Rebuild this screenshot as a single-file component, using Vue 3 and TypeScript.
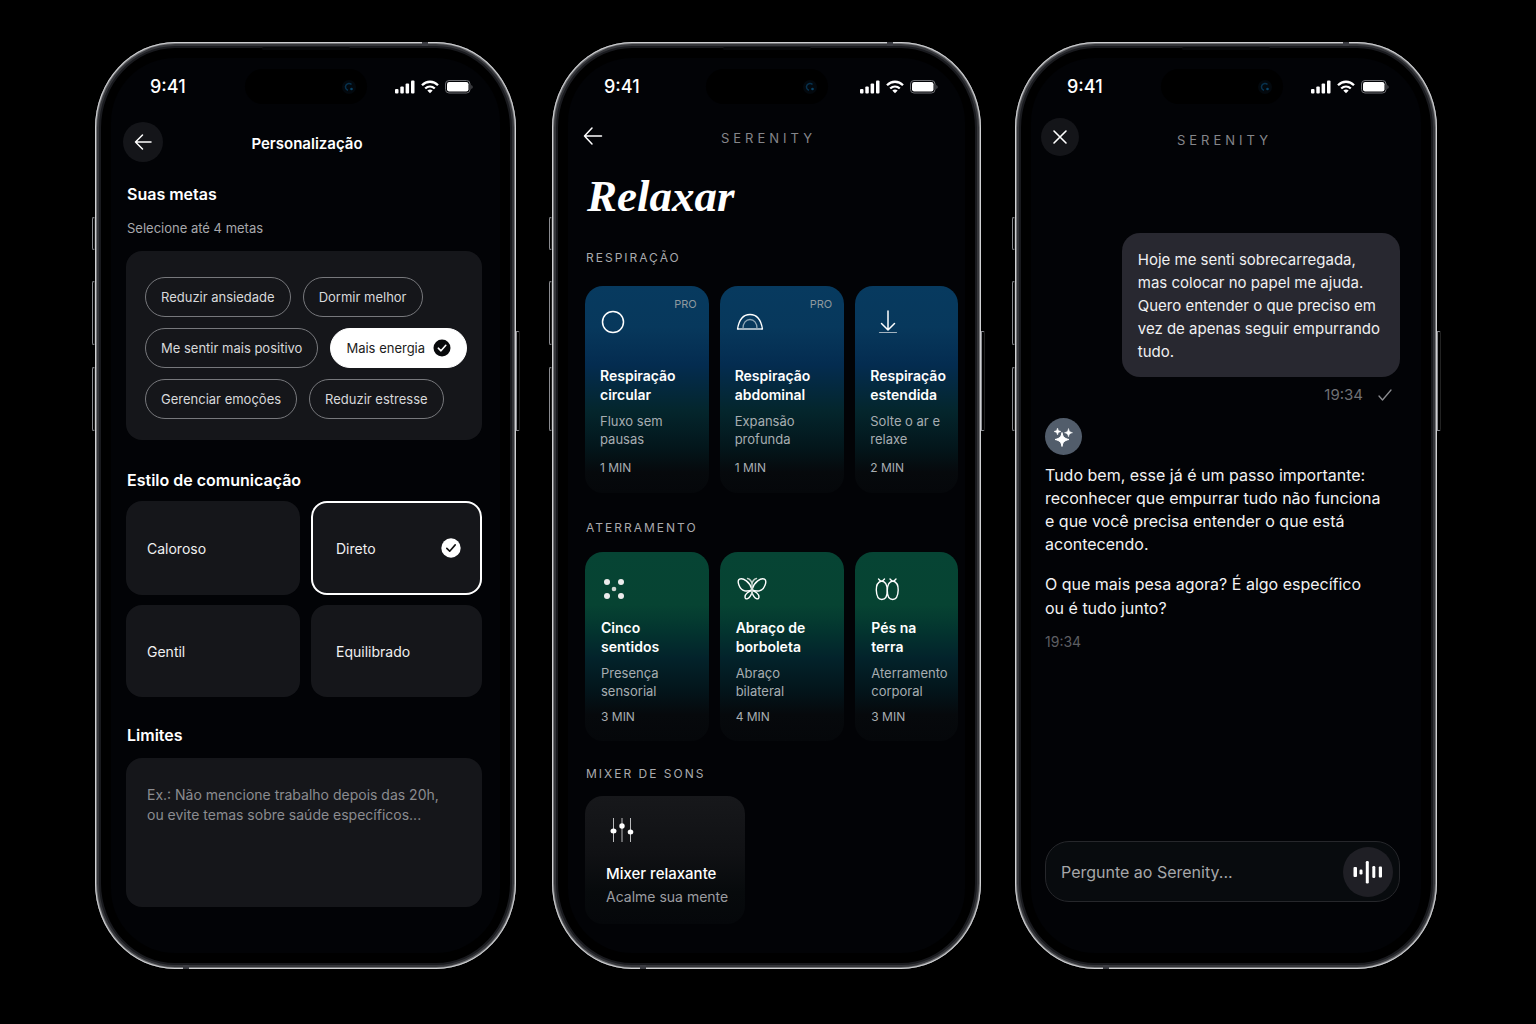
<script setup lang="ts">
import { ref } from 'vue'

interface Exercise {
  icon: string
  title: [string, string]
  text: [string, string]
  minutes: string
  pro?: boolean
}

interface Goal {
  label: string
  checked: boolean
}

const goalRows = ref<Goal[][]>([
  [
    { label: 'Reduzir ansiedade', checked: false },
    { label: 'Dormir melhor', checked: false },
  ],
  [
    { label: 'Me sentir mais positivo', checked: false },
    { label: 'Mais energia', checked: true },
  ],
  [
    { label: 'Gerenciar emoções', checked: false },
    { label: 'Reduzir estresse', checked: false },
  ],
])

const styles = ['Caloroso', 'Direto', 'Gentil', 'Equilibrado']
const chosenStyle = ref('Direto')
const limits = ref('')
const question = ref('')

const breathing: Exercise[] = [
  { icon: 'circle', title: ['Respiração', 'circular'], text: ['Fluxo sem', 'pausas'], minutes: '1 MIN', pro: true },
  { icon: 'dome', title: ['Respiração', 'abdominal'], text: ['Expansão', 'profunda'], minutes: '1 MIN', pro: true },
  { icon: 'down', title: ['Respiração', 'estendida'], text: ['Solte o ar e', 'relaxe'], minutes: '2 MIN' },
]

const grounding: Exercise[] = [
  { icon: 'dots', title: ['Cinco', 'sentidos'], text: ['Presença', 'sensorial'], minutes: '3 MIN' },
  { icon: 'butterfly', title: ['Abraço de', 'borboleta'], text: ['Abraço', 'bilateral'], minutes: '4 MIN' },
  { icon: 'feet', title: ['Pés na', 'terra'], text: ['Aterramento', 'corporal'], minutes: '3 MIN' },
]

const groups = [
  { name: 'Respiração', tone: 'blue', items: breathing },
  { name: 'Aterramento', tone: 'green', items: grounding },
]

const phones = ['goals', 'relax', 'chat']
</script>

<template>
  <main class="stage">
    <section v-for="phone in phones" :key="phone" class="phone" :class="phone">
      <i class="key key-action"></i>
      <i class="key key-up"></i>
      <i class="key key-down"></i>
      <i class="key key-power"></i>
      <i class="band band-top"></i>
      <i class="band band-bottom"></i>
      <i class="speaker"></i>

      <div class="status">
        <span class="clock">9:41</span>
        <span class="island">
          <svg width="16" height="16" viewBox="0 0 16 16" fill="none">
            <circle cx="8" cy="8" r="7" fill="#03080d" />
            <path d="M10.5 5.5A3.5 3.5 0 1 0 7 11.300" stroke="#07314d" stroke-width="1.500" />
            <circle cx="10.500" cy="10" r="1.300" fill="#084468" />
          </svg>
        </span>
        <span class="indicators">
          <svg width="20" height="14" viewBox="0 0 20 14" fill="#fff">
            <rect x="0" y="9" width="3.500" height="4.500" rx="1" />
            <rect x="5.300" y="6.500" width="3.500" height="7" rx="1" />
            <rect x="10.600" y="3.500" width="3.500" height="10" rx="1" />
            <rect x="16" y="0.500" width="3.500" height="13" rx="1" />
          </svg>
          <svg width="18" height="14" viewBox="0 0 18 14" fill="none" stroke="#fff" stroke-width="2.300">
            <path d="M1 5.200C5.500 0.600 12.500 0.600 17 5.200" />
            <path d="M4.200 8.500C7 5.900 11 5.900 13.800 8.500" />
            <path d="M9 13.300L6.300 10.500C8 9.200 10 9.200 11.700 10.500Z" fill="#fff" stroke="none" />
          </svg>
          <svg width="28" height="14" viewBox="0 0 28 14" fill="none">
            <rect x="0.500" y="0.500" width="24.500" height="12.500" rx="3.500" stroke="#6d6e72" />
            <rect x="2" y="2" width="21.500" height="9.500" rx="2.200" fill="#fff" />
            <path d="M26.500 5V9C27.800 8.300 27.800 5.700 26.500 5Z" fill="#6d6e72" />
          </svg>
        </span>
      </div>

      <template v-if="phone === 'goals'">
        <header class="bar">
          <button type="button" class="round" aria-label="Voltar">
            <svg width="18" height="18" viewBox="0 0 18 18" fill="none" stroke="#fff" stroke-width="1.500" stroke-linecap="round" stroke-linejoin="round">
              <path d="M17 9H1.500M8.500 2L1.500 9L8.500 16" />
            </svg>
          </button>
          <h1>Personalização</h1>
        </header>

        <h2 class="first">Suas metas</h2>
        <p class="hint">Selecione até 4 metas</p>
        <div class="panel">
          <div v-for="(row, i) in goalRows" :key="i" class="row">
            <label v-for="goal in row" :key="goal.label" class="chip" :class="{ on: goal.checked }">
              <input v-model="goal.checked" type="checkbox" class="ghost" />
              {{ goal.label }}
              <svg v-if="goal.checked" width="18" height="18" viewBox="0 0 18 18" fill="none">
                <circle cx="9" cy="9" r="8.500" fill="#08090b" />
                <path d="M5.300 9.200L8 11.800L12.800 6.300" stroke="#fff" stroke-width="1.600" stroke-linecap="round" stroke-linejoin="round" />
              </svg>
            </label>
          </div>
        </div>

        <h2 class="second">Estilo de comunicação</h2>
        <div class="tiles">
          <label v-for="name in styles" :key="name" class="tile" :class="{ on: chosenStyle === name }">
            <input v-model="chosenStyle" type="radio" name="style" class="ghost" :value="name" />
            {{ name }}
            <svg v-if="chosenStyle === name" width="20" height="20" viewBox="0 0 20 20" fill="none">
              <circle cx="10" cy="10" r="9.700" fill="#fff" />
              <path d="M5.800 10.400L8.700 13.200L14.200 6.900" stroke="#111" stroke-width="1.600" stroke-linecap="round" stroke-linejoin="round" />
            </svg>
          </label>
        </div>

        <h2 class="third"><label for="limits">Limites</label></h2>
        <textarea
          id="limits"
          v-model="limits"
          placeholder="Ex.: Não mencione trabalho depois das 20h,&#10;ou evite temas sobre saúde específicos..."
        ></textarea>
      </template>

      <template v-else-if="phone === 'relax'">
        <header class="bar">
          <button type="button" class="plain" aria-label="Voltar">
            <svg width="20" height="20" viewBox="0 0 20 20" fill="none" stroke="#fff" stroke-width="1.500" stroke-linecap="round" stroke-linejoin="round">
              <path d="M18.500 10H1.500M9 2L1.500 10L9 18" />
            </svg>
          </button>
          <span class="brand">SERENITY</span>
        </header>
        <h1 class="display">Relaxar</h1>

        <template v-for="group in groups" :key="group.name">
          <h2 class="label" :class="group.tone">{{ group.name }}</h2>
          <div class="deck" :class="group.tone">
            <button v-for="item in group.items" :key="item.icon" type="button" class="card">
              <span v-if="item.pro" class="pro">PRO</span>
              <svg v-if="item.icon === 'circle'" width="26" height="26" viewBox="0 0 26 26" fill="none" stroke="#fff" stroke-width="1.500">
                <circle cx="13" cy="13" r="10.500" />
              </svg>
              <svg v-else-if="item.icon === 'dome'" width="30" height="26" viewBox="0 0 30 26" fill="none" stroke="#fff" stroke-width="1.300" stroke-linejoin="round">
                <path d="M2.500 20H27.500C26 11 21.500 5.500 15 5.500S4 11 2.500 20Z" />
                <path d="M8 19.500C8 14 11 10.500 15 10.500S22 14 22 19.500" stroke="#8fa6b6" />
                <path d="M4 20H26" stroke="#8fa6b6" />
              </svg>
              <svg v-else-if="item.icon === 'down'" width="36" height="26" viewBox="0 0 36 26" fill="none" stroke="#fff" stroke-width="1.500" stroke-linecap="round" stroke-linejoin="round">
                <path d="M18 2V20.500M11.500 14.500L18 21L24.500 14.500" />
                <path d="M9.500 23.500H26.500" stroke="#a3b3bf" stroke-width="1.200" />
              </svg>
              <svg v-else-if="item.icon === 'dots'" width="26" height="26" viewBox="0 0 26 26" fill="#ececec">
                <circle cx="6" cy="6" r="3" />
                <circle cx="20" cy="6" r="3" />
                <circle cx="6" cy="20" r="3" />
                <circle cx="20" cy="20" r="3" />
                <circle cx="13" cy="13" r="2.300" fill="#cfd6d2" />
              </svg>
              <svg v-else-if="item.icon === 'butterfly'" width="32" height="26" viewBox="-2 0 32 26" fill="none" stroke="#fff" stroke-width="1.400" stroke-linecap="round" stroke-linejoin="round">
                <path d="M14 13.500C12 6 5 1.500 1.500 3.200C-1.500 4.800 1.500 13.800 6.500 14.800C9.500 15.300 12 15 14 13.500Z" />
                <path d="M14 13.500C16 6 23 1.500 26.500 3.200C29.500 4.800 26.500 13.800 21.500 14.800C18.500 15.300 16 15 14 13.500Z" />
                <path d="M14 14.500C11 15 7 18 7 21C7 24 11.500 24 14 16.500" />
                <path d="M14 14.500C17 15 21 18 21 21C21 24 16.500 24 14 16.500" />
                <path d="M14 18V8M14 8C13.500 5 11.500 3 9.500 2.500M14 8C14.500 5 16.500 3 18.500 2.500" stroke="#c6d2cc" />
              </svg>
              <svg v-else width="34" height="26" viewBox="0 0 34 26" fill="none" stroke="#fff" stroke-width="1.400" stroke-linecap="round">
                <path d="M10.500 5C7 6 5.200 10 5.300 14C5.500 20 7.500 23.500 10.800 23.500C14.500 23.500 16.300 20 16.300 14.500C16.300 9.500 14.500 5.500 10.500 5Z" />
                <path d="M22 5C25.500 6 27.300 10 27.200 14C27 20 25 23.500 21.700 23.500C18 23.500 16.300 20 16.300 14.500C16.300 9.500 18 5.500 22 5Z" />
                <path d="M7.500 3L9.500 5M13.500 3L11.500 5M19 3L21 5M25 3L23 5" />
              </svg>
              <strong>{{ item.title[0] }}<br />{{ item.title[1] }}</strong>
              <span class="text">{{ item.text[0] }}<br />{{ item.text[1] }}</span>
              <span class="minutes">{{ item.minutes }}</span>
            </button>
          </div>
        </template>

        <h2 class="label mix">Mixer de sons</h2>
        <button type="button" class="mixer">
          <svg width="32" height="26" viewBox="0 0 32 26" fill="#fff">
            <path d="M7 1H8V25H7ZM15.500 1H16.500V25H15.500ZM24 1H25V25H24Z" fill="#b9babc" />
            <ellipse cx="7.500" cy="14" rx="3" ry="2.500" />
            <ellipse cx="16" cy="9" rx="2.700" ry="2.700" />
            <ellipse cx="24.500" cy="15" rx="2.800" ry="2.500" />
          </svg>
          <strong>Mixer relaxante</strong>
          <span>Acalme sua mente</span>
        </button>
      </template>

      <template v-else>
        <header class="bar">
          <button type="button" class="round" aria-label="Fechar">
            <svg width="16" height="16" viewBox="0 0 16 16" fill="none" stroke="#fff" stroke-width="1.600" stroke-linecap="round">
              <path d="M2 2L14 14M14 2L2 14" />
            </svg>
          </button>
          <span class="brand">SERENITY</span>
        </header>

        <p class="bubble">
          Hoje me senti sobrecarregada,<br />mas colocar no papel me ajuda.<br />Quero entender o que preciso em<br />vez
          de apenas seguir empurrando<br />tudo.
        </p>
        <div class="sent">
          <time>19:34</time>
          <svg width="16" height="14" viewBox="0 0 16 14" fill="none" stroke="#8b8c90" stroke-width="1.300" stroke-linecap="round" stroke-linejoin="round">
            <path d="M2 8L5.500 12L14 2" />
          </svg>
        </div>

        <div class="avatar">
          <svg width="20" height="20" viewBox="1 0 20 20" fill="#fff">
            <path d="M9 5.500C9.800 10 11.500 11.500 16 12.500C11.500 13.500 9.800 15 9 19.500C8.200 15 6.500 13.500 2 12.500C6.500 11.500 8.200 10 9 5.500Z" stroke="#fff" stroke-linejoin="round" />
            <path d="M4.500 1C5 3.200 5.800 4 8 4.500C5.800 5 5 5.800 4.500 8C4 5.800 3.200 5 1 4.500C3.200 4 4 3.200 4.500 1Z" stroke="#fff" stroke-width="0.500" />
            <path d="M15.500 1.500C16 4.300 17 5.200 19.500 5.700C17 6.200 16 7 15.500 9.800C15 7 14 6.200 11.500 5.700C14 5.200 15 4.300 15.500 1.500Z" stroke="#fff" stroke-width="0.500" />
          </svg>
        </div>
        <p class="reply">
          Tudo bem, esse já é um passo importante:<br />reconhecer que empurrar tudo não funciona<br />e que você precisa
          entender o que está<br />acontecendo.
        </p>
        <p class="reply more">O que mais pesa agora? É algo específico<br />ou é tudo junto?</p>
        <time class="received">19:34</time>

        <form class="composer" @submit.prevent>
          <input v-model="question" type="text" aria-label="Pergunte ao Serenity" placeholder="Pergunte ao Serenity..." />
          <button type="button" aria-label="Falar">
            <svg width="30" height="24" viewBox="0 0 30 24" fill="#fff">
              <rect x="0.500" y="7" width="3.500" height="10" rx="1" />
              <rect x="6.500" y="9.500" width="3" height="5" rx="1.200" />
              <rect x="12.800" y="1" width="3" height="22.500" rx="1.300" />
              <rect x="19.300" y="6" width="3" height="12" rx="1.300" />
              <rect x="25.800" y="6.500" width="3.200" height="11" rx="1" />
            </svg>
          </button>
        </form>
      </template>
    </section>
  </main>
</template>

<style>
html,
body {
  background: #000;
}
</style>

<style scoped>
.stage {
  box-sizing: border-box;
  min-height: 100vh;
  display: grid;
  grid-template-columns: minmax(0, 423fr) minmax(0, 429fr) minmax(0, 422fr);
  align-items: stretch;
  align-content: start;
  gap: 34px;
  padding: 42px 99px 55px 95px;
  background: #000;
  color: #fff;
  font-family: Inter, 'Liberation Sans', sans-serif;
}

.stage *,
.stage *::before {
  box-sizing: border-box;
}

h1,
h2,
p {
  margin: 0;
  font-weight: 500;
}

button,
input,
textarea {
  font-family: inherit;
  color: inherit;
  border: 0;
  margin: 0;
  padding: 0;
}

svg {
  display: block;
  flex: none;
}

.phone {
  position: relative;
  display: flex;
  flex-direction: column;
  border-radius: 80px / 86px;
  background: #000;
  box-shadow:
    inset 0 0 0 1px #cfd0d2,
    inset 0 0 0 2px #77787b,
    inset 0 0 0 4px #343539,
    inset 0 0 0 6px #191a1e;
}

.phone::before {
  content: '';
  position: absolute;
  inset: 16px;
  border-radius: 64px;
  background: #020306;
}

.phone > * {
  position: relative;
}

.phone > .key,
.phone > .band,
.phone > .speaker {
  position: absolute;
}

.key {
  left: -3px;
  width: 3px;
  border: 1px solid #8a8b90;
  border-right-color: #222;
  border-radius: 2px 0 0 2px;
}

.key-action {
  top: 175px;
  height: 33px;
}

.key-up {
  top: 239px;
  height: 64px;
}

.key-down {
  top: 325px;
  height: 64px;
}

.key-power {
  left: auto;
  right: -4px;
  width: 4px;
  top: 289px;
  height: 100px;
  border-radius: 0 2px 2px 0;
}

.band {
  width: 6px;
  height: 4px;
  background: #3a3b41;
}

.band-top {
  top: 0;
  right: 88px;
}

.band-bottom {
  bottom: 0;
  left: 88px;
}

.speaker {
  top: 5px;
  left: 50%;
  width: 88px;
  height: 3px;
  margin-left: -44px;
  border-radius: 2px;
  background: #08090b;
}

.status {
  display: grid;
  grid-template-columns: 1fr 122px 1fr;
  align-items: center;
  height: 35px;
  margin-top: 27px;
}

.clock {
  padding-left: 55px;
  font-size: 18px;
  line-height: 20px;
  font-weight: 500;
}

.island {
  display: flex;
  align-items: center;
  justify-content: flex-end;
  height: 35px;
  padding-right: 10px;
  border-radius: 18px;
  background: #000;
}

.indicators {
  display: flex;
  justify-content: flex-end;
  gap: 6px;
  padding-right: 43px;
}

.relax .clock,
.chat .clock {
  padding-left: 52px;
}

.chat .status {
  padding-right: 8px;
}

.chat .indicators {
  padding-right: 40px;
}

.bar {
  display: grid;
  grid-template-columns: 1fr auto 1fr;
  align-items: center;
}

.round {
  display: grid;
  place-items: center;
  width: 40px;
  height: 40px;
  border-radius: 50%;
  background: #141519;
}

.brand {
  padding-top: 4px;
  padding-left: 4px;
  color: #85868a;
  font-size: 13px;
  line-height: 20px;
  letter-spacing: 4px;
}

.ghost {
  position: absolute;
  width: 1px;
  height: 1px;
  opacity: 0;
}

/* Personalização */
.goals {
  margin-right: 2px;
  padding: 0 0 62px;
}

.goals > :not(.status, .key, .band, .speaker) {
  margin-left: 31px;
  margin-right: 34px;
}

.goals > .bar {
  margin: 18px 28px 0;
}

.goals h1 {
  padding: 4px 0 0 3px;
  font-size: 15px;
  line-height: 20px;
  font-weight: 600;
}

.goals h2 {
  padding-left: 1px;
  font-size: 16px;
  line-height: 22px;
  font-weight: 600;
}

.goals .first {
  margin-top: 21px;
}

.goals .second {
  margin-top: 29px;
}

.goals .third {
  margin-top: 27px;
}

.hint {
  margin-top: 13px;
  padding-left: 1px;
  color: #a7a8ab;
  font-size: 13px;
  line-height: 20px;
  font-weight: 400;
}

.panel {
  display: flex;
  flex-direction: column;
  gap: 11px;
  margin-top: 13px;
  padding: 26px 14px 21px 19px;
  border-radius: 16px;
  background: #15161a;
}

.row {
  display: flex;
  gap: 12px;
}

.chip {
  position: relative;
  display: flex;
  align-items: center;
  gap: 8px;
  height: 40px;
  padding: 0 15px;
  border: 1px solid #77787c;
  border-radius: 20px;
  color: #d8d9db;
  font-size: 13px;
  white-space: nowrap;
}

.chip.on {
  border-color: #fff;
  background: #fff;
  color: #1b1c20;
}

.tiles {
  display: grid;
  grid-template-columns: 174fr 171fr;
  grid-template-rows: 94px 92px;
  gap: 10px 11px;
  margin-top: 10px;
}

.tile {
  position: relative;
  display: flex;
  align-items: center;
  justify-content: space-between;
  padding: 0 21px;
  border-radius: 16px;
  background: #15161a;
  color: #f0f0f1;
  font-size: 14px;
}

.tile:nth-child(even) {
  padding-left: 25px;
}

.tile.on {
  box-shadow: inset 0 0 0 2px #fff;
}

textarea {
  height: 149px;
  margin-top: 12px;
  padding: 27px 20px 20px 21px;
  border-radius: 16px;
  background: #15161a;
  font-size: 14px;
  line-height: 20px;
  resize: none;
  outline: none;
}

textarea::placeholder {
  color: #8b8c90;
  opacity: 1;
}

/* Relaxar */
.relax {
  padding-bottom: 45px;
}

.relax > :not(.status, .key, .band, .speaker) {
  margin-left: 33px;
}

.relax > .bar {
  height: 36px;
  margin: 14px 31px 0;
}

.plain {
  width: 20px;
  background: none;
}

.display {
  margin-top: 14px;
  padding-left: 2px;
  font-family: 'Liberation Serif', serif;
  font-size: 45px;
  line-height: 56px;
  font-style: italic;
  font-weight: 700;
}

.label {
  margin-top: 25px;
  padding-left: 1px;
  color: #a9aaad;
  font-size: 12px;
  line-height: 18px;
  font-weight: 400;
  letter-spacing: 2px;
  text-transform: uppercase;
}

.label.green {
  margin-top: 26px;
}

.label.mix {
  margin-top: 24px;
}

.deck {
  display: grid;
  grid-template-columns: 124fr 125fr 103fr;
  gap: 11px;
  margin-top: 19px;
  margin-right: 23px;
}

.deck.green {
  margin-top: 15px;
}

.card {
  position: relative;
  display: flex;
  flex-direction: column;
  align-items: flex-start;
  padding: 23px 0 17px 15px;
  border-radius: 18px;
  background: linear-gradient(#073a5f 0%, #07385c 20%, #042c50 38%, #04262d 60%, #03161b 78%, #06090c 90%, #05070a 100%);
  text-align: left;
}

.green .card {
  padding-top: 24px;
  padding-bottom: 16px;
  padding-left: 16px;
  background: linear-gradient(#064434 0%, #064332 28%, #03342f 42%, #03232b 56%, #03141a 74%, #06090c 86%, #05070a 100%);
}

.pro {
  position: absolute;
  top: 11px;
  right: 12px;
  color: #8e999f;
  font-size: 11px;
  line-height: 14px;
}

.card strong {
  margin-top: 31px;
  font-size: 14px;
  line-height: 19px;
  font-weight: 600;
}

.green .card strong {
  margin-top: 16px;
}

.text {
  margin-top: 8px;
  color: #a7adb1;
  font-size: 13px;
  line-height: 18px;
}

.minutes {
  margin-top: 12px;
  color: #a7adb1;
  font-size: 12px;
  line-height: 16px;
}

.green .minutes {
  margin-top: 9px;
}

.mixer {
  display: flex;
  flex-direction: column;
  align-items: flex-start;
  align-self: flex-start;
  margin-top: 13px;
  padding: 21px 17px 17px 21px;
  border-radius: 18px;
  background: linear-gradient(#17181b, #101114 45%, #070a0c 75%, #05070a);
  font-size: 14px;
  line-height: 20px;
}

.mixer strong {
  margin-top: 21px;
  font-size: 15px;
  font-weight: 500;
}

.mixer span {
  margin-top: 3px;
  color: #9c9da1;
}

/* Conversa */
.chat {
  padding-bottom: 67px;
}

.chat > :not(.status, .key, .band, .speaker) {
  margin-left: 30px;
  margin-right: 37px;
}

.chat > .bar {
  margin: 14px 33px 0 26px;
}

.chat .round {
  width: 38px;
  height: 38px;
}

.chat .brand {
  padding-top: 6px;
}

.bubble {
  align-self: flex-end;
  margin-top: 77px;
  padding: 15px 20px 14px 16px;
  border-radius: 18px;
  background: #282830;
  color: #f0f0f2;
  font-size: 15px;
  line-height: 23px;
  font-weight: 400;
}

.sent {
  display: flex;
  align-items: center;
  justify-content: flex-end;
  gap: 14px;
  margin-top: 8px;
  padding-right: 7px;
  color: #6f7074;
  font-size: 15px;
  line-height: 20px;
}

.avatar {
  display: grid;
  place-items: center;
  width: 37px;
  height: 37px;
  margin-top: 13px;
  border-radius: 50%;
  background: #525d6b;
}

.reply {
  margin-top: 9px;
  color: #f2f2f3;
  font-size: 16px;
  line-height: 23px;
  font-weight: 400;
}

.reply.more {
  margin-top: 16px;
  line-height: 24px;
}

.received {
  margin-top: 12px;
  color: #5d5e62;
  font-size: 14px;
  line-height: 20px;
}

.composer {
  display: flex;
  align-items: center;
  height: 61px;
  margin-top: auto;
  padding: 0 6px 0 15px;
  border: 1px solid #26272b;
  border-radius: 24px;
  background: #080b0e;
}

.composer input {
  flex: 1;
  min-width: 0;
  background: none;
  font-size: 16px;
  line-height: 24px;
  outline: none;
}

.composer input::placeholder {
  color: #a5a6a9;
  opacity: 1;
}

.composer button {
  display: grid;
  place-items: center;
  width: 50px;
  height: 50px;
  border-radius: 50%;
  background: #1f1f25;
}
</style>
